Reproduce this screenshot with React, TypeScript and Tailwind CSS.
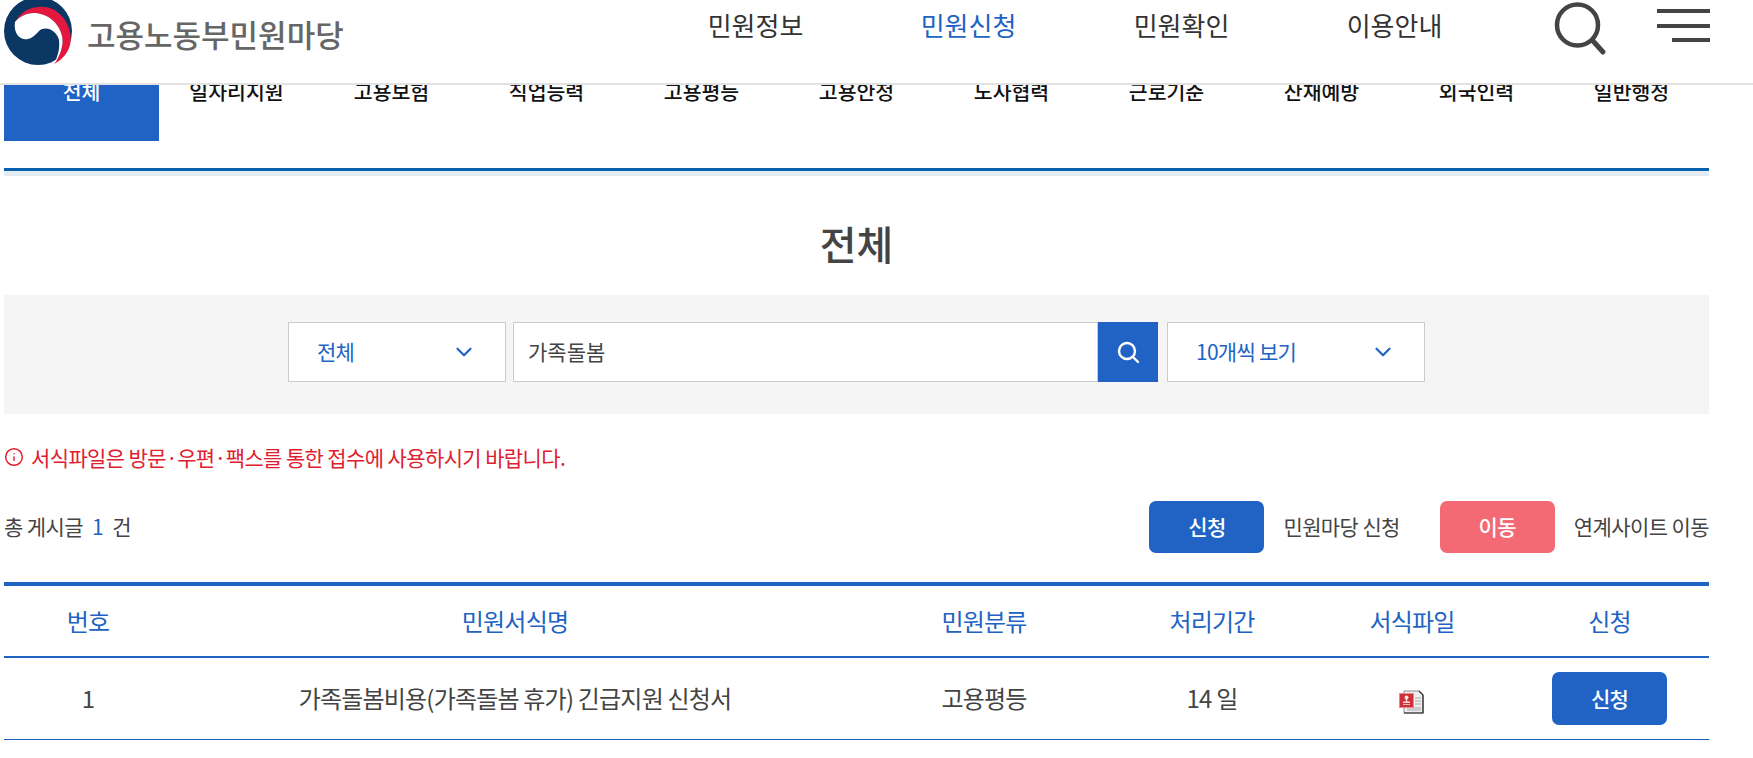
import { ChevronDown, Info } from 'lucide-react';

const tabs = ['전체', '일자리지원', '고용보험', '직업능력', '고용평등', '고용안정', '노사협력', '근로기준', '산재예방', '외국인력', '일반행정'];
const navItems = ['민원정보', '민원신청', '민원확인', '이용안내'];

function Logo() {
    return (
        <svg width="68" height="65" viewBox="0 0 68 65" className="shrink-0">
            <circle cx="34" cy="31" r="34" fill="#0a3764" />
            <path d="M11 22 C18 8 38 2 52 11 C64 19 69 35 66 45 C64 53 58 60 50 64 C56 56 60 46 58 36 C55 22 42 13 30 13 C22 13 15 17 11 22 Z" fill="#e4173e" />
            <path d="M11 22 C15 17 22 13 30 13 C42 13 55 22 58 36 C60 46 56 56 50 64 C54 56 56 48 55 40 C53 31 42 25 35 31 C32 34 29 38 24 39 C17 41 9 34 11 22 Z" fill="#ffffff" />
        </svg>
    );
}

function DocIcon() {
    return (
        <svg width="26" height="24" viewBox="0 0 26 24">
            <path d="M5 1 H20 L24 5 V23 H5 Z" fill="#eeeeee" stroke="#8a8a8a" strokeWidth="1" />
            <path d="M20 1 L24 5 V23 H5" fill="none" stroke="#222222" strokeWidth="1.2" />
            <path d="M16 8 H22 M16 11 H22 M16 14 H22 M8 18 H22 M8 20 H22" stroke="#aaaaaa" strokeWidth="1" />
            <rect x="0.5" y="3.5" width="14" height="14" fill="#cf2f36" stroke="#e88a8c" strokeWidth="1" />
            <circle cx="7.5" cy="7.5" r="2" fill="#f8dede" />
            <path d="M6.8 9 H8.2 V11.5 H11 V13 H4 V11.5 H6.8 Z" fill="#f8dede" />
            <path d="M4 14.5 H11" stroke="#f8dede" strokeWidth="0.8" />
        </svg>
    );
}

export default function App() {
    return (
        <div className="w-[1753px] h-[758px] overflow-hidden bg-white text-[#444444] font-['Noto_Sans_CJK_KR','Noto_Sans',sans-serif]">
            <header className="relative z-10 h-[85px] bg-white border-b-2 border-[#e2e2e2] flex items-start">
                <div className="w-[649px] pl-[4px] flex items-start gap-[15px]">
                    <Logo />
                    <span className="mt-[14px] text-[31px] leading-[40px] font-medium text-[#666666]">고용노동부민원마당</span>
                </div>
                <nav className="flex w-[852px] mt-[6px]">
                    {navItems.map((item) => (
                        <a key={item} className={`w-[213px] text-center text-[26px] leading-[38px] ${item === '민원신청' ? 'text-[#2063c4]' : 'text-[#333333]'}`}>
                            {item}
                        </a>
                    ))}
                </nav>
                <svg width="60" height="56" viewBox="0 0 60 56" className="ml-[52px] shrink-0 text-[#444444]">
                    <circle cx="24.5" cy="25" r="20.5" fill="none" stroke="currentColor" strokeWidth="4.5" />
                    <path d="M40 41 L50 52" stroke="currentColor" strokeWidth="5" strokeLinecap="round" />
                </svg>
                <div className="ml-[44px] mt-[9px] w-[53px] flex flex-col items-end gap-[10.5px]">
                    <div className="h-[4px] w-full bg-[#444444]" />
                    <div className="h-[4px] w-full bg-[#444444]" />
                    <div className="h-[4px] w-[38px] bg-[#444444]" />
                </div>
            </header>

            <main className="ml-[4px] w-[1705px]">
                <div className="-mt-[20px] grid grid-cols-11 h-[76px]">
                    {tabs.map((tab, i) => (
                        <a key={tab} className={`pt-[11px] text-center text-[20.5px] leading-[30px] font-medium ${i === 0 ? 'bg-[#2063c4] text-white' : 'text-[#111111]'}`}>
                            {tab}
                        </a>
                    ))}
                </div>

                <div className="mt-[27px] h-[8px] border-t-[3px] border-[#0561ae] bg-[#e3ebf3]" />

                <h2 className="mt-[40px] text-center text-[40px] leading-[54px] font-medium text-[#444444]">전체</h2>

                <div className="mt-[25px] h-[119px] bg-[#f5f5f5] flex items-start justify-center pt-[27px] pl-[3px] pr-[3px]">
                    <div className="w-[218px] h-[60px] bg-white border border-[#cccccc] flex items-center justify-between pl-[28px] pr-[28px] text-[21px] tracking-[-0.75px] text-[#2063c4]">
                        전체
                        <ChevronDown size={26} strokeWidth={2} />
                    </div>
                    <div className="ml-[7px] w-[585px] h-[60px] bg-white border border-[#cccccc] flex items-center pl-[14px] text-[21px] text-[#444444]">가족돌봄</div>
                    <div className="w-[60px] h-[60px] bg-[#2063c4] flex items-center justify-center">
                        <svg width="24" height="24" viewBox="0 0 24 24" fill="none" stroke="#ffffff" strokeWidth="2.4" strokeLinecap="round">
                            <circle cx="11" cy="11" r="8" />
                            <path d="M17 17 L22 22" />
                        </svg>
                    </div>
                    <div className="ml-[9px] w-[258px] h-[60px] bg-white border border-[#cccccc] flex items-center justify-between pl-[28px] pr-[28px] text-[21px] tracking-[-0.75px] text-[#2063c4]">
                        10개씩 보기
                        <ChevronDown size={26} strokeWidth={2} />
                    </div>
                </div>

                <p className="mt-[28px] flex items-center gap-[7px] text-[21px] leading-[30px] tracking-[-0.62px] text-[#e0202f]">
                    <Info size={20} strokeWidth={1.8} />
                    서식파일은 방문·우편·팩스를 통한 접수에 사용하시기 바랍니다.
                </p>

                <div className="mt-[29px] h-[52px] flex items-center justify-between text-[21px] tracking-[-0.6px]">
                    <div>
                        총 게시글 <span className="mx-[5px] text-[#2063c4]">1</span> 건
                    </div>
                    <div className="flex items-center">
                        <span className="w-[115px] h-[52px] rounded-[7px] bg-[#2063c4] text-white font-medium flex items-center justify-center">신청</span>
                        <span className="ml-[19px]">민원마당 신청</span>
                        <span className="ml-[40px] w-[115px] h-[52px] rounded-[7px] bg-[#f46a74] text-white font-medium flex items-center justify-center">이동</span>
                        <span className="ml-[19px]">연계사이트 이동</span>
                    </div>
                </div>

                <table className="mt-[29px] w-full table-fixed border-t-[4px] border-[#2063c4] text-[24px] tracking-[-0.8px]">
                    <colgroup>
                        <col className="w-[168px]" />
                        <col className="w-[686px]" />
                        <col className="w-[252px]" />
                        <col className="w-[204px]" />
                        <col className="w-[196px]" />
                        <col className="w-[199px]" />
                    </colgroup>
                    <thead>
                        <tr className="h-[73px] border-b-2 border-[#2063c4] text-[#2063c4]">
                            {['번호', '민원서식명', '민원분류', '처리기간', '서식파일', '신청'].map((col) => (
                                <th key={col} className="font-normal">{col}</th>
                            ))}
                        </tr>
                    </thead>
                    <tbody>
                        <tr className="h-[82px] border-b border-[#1a5cb8] text-center">
                            <td>1</td>
                            <td>가족돌봄비용(가족돌봄 휴가) 긴급지원 신청서</td>
                            <td>고용평등</td>
                            <td>14 일</td>
                            <td><span className="inline-flex align-middle"><DocIcon /></span></td>
                            <td>
                                <span className="inline-flex w-[115px] h-[53px] rounded-[7px] bg-[#2063c4] text-white text-[21px] tracking-[-0.75px] font-medium items-center justify-center">신청</span>
                            </td>
                        </tr>
                    </tbody>
                </table>
            </main>
        </div>
    );
}
